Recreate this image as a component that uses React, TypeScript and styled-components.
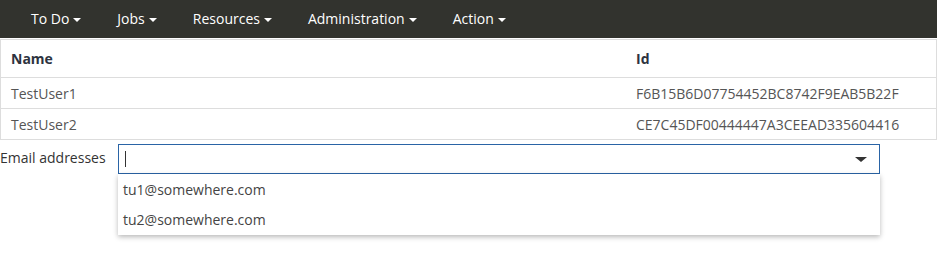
import styled, { createGlobalStyle } from "styled-components";

const GlobalStyle = createGlobalStyle`
  body {
    margin: 0;
    font-family: "Open Sans", "Liberation Sans", sans-serif;
    font-size: 14px;
    color: #333;
    background: #fff;
  }
`;

const NavBar = styled.nav`
  display: flex;
  align-items: center;
  height: 38px;
  padding-left: 16px;
  background-color: #32332e;
`;

const NavItem = styled.div`
  display: flex;
  align-items: center;
  gap: 4px;
  padding: 0 15px;
  margin-right: 6px;
  color: #fff;
  font-size: 14px;
  line-height: 38px;
`;

const Caret = styled.span`
  display: inline-block;
  width: 0;
  height: 0;
  border-top: 4px solid currentColor;
  border-left: 4px solid transparent;
  border-right: 4px solid transparent;
  margin-top: 1px;
`;

const Table = styled.table`
  width: 100%;
  margin-top: 1px;
  border-collapse: collapse;
  border: 1px solid #ddd;
`;

const HeadCell = styled.th<{ $width?: number }>`
  text-align: left;
  font-weight: 700;
  color: #2d3340;
  height: 37px;
  padding: 0 10px;
  border-bottom: 1px solid #ddd;
  width: ${({ $width }) => ($width ? `${$width}px` : "auto")};
`;

const Cell = styled.td`
  height: 30px;
  padding: 0 10px;
  color: #555;
  border-top: 1px solid #ddd;
`;

const FieldRow = styled.div`
  display: flex;
  align-items: flex-start;
  margin-top: 4px;
  padding-bottom: 12px;
`;

const Label = styled.label`
  width: 118px;
  line-height: 28px;
  color: #333;
`;

const Combo = styled.div`
  display: flex;
  flex-direction: column;
  width: 762px;
`;

const Input = styled.div`
  display: flex;
  align-items: center;
  justify-content: space-between;
  height: 28px;
  padding: 0 12px 0 6px;
  border: 1px solid #2a64a6;
  background: #fff;
`;

const Cursor = styled.span`
  width: 1px;
  height: 16px;
  background: #333;
`;

const Arrow = styled.span`
  width: 0;
  height: 0;
  border-top: 5px solid #333;
  border-left: 6px solid transparent;
  border-right: 6px solid transparent;
`;

const EmailList = styled.div`
  display: flex;
  flex-direction: column;
  padding-top: 1px;
  background: #fff;
  box-shadow: 0 2px 5px rgba(0, 0, 0, 0.28);
`;

const EmailItem = styled.div`
  height: 30px;
  line-height: 30px;
  padding: 0 5px;
  color: #444;
`;

const navItems = ["To Do", "Jobs", "Resources", "Administration", "Action"];

const users = [
  { name: "TestUser1", id: "F6B15B6D07754452BC8742F9EAB5B22F" },
  { name: "TestUser2", id: "CE7C45DF00444447A3CEEAD335604416" },
];

const emails = ["tu1@somewhere.com", "tu2@somewhere.com"];

export default function App() {
  return (
    <>
      <GlobalStyle />
      <NavBar>
        {navItems.map((item) => (
          <NavItem key={item}>
            {item}
            <Caret />
          </NavItem>
        ))}
      </NavBar>
      <Table>
        <thead>
          <tr>
            <HeadCell $width={605}>Name</HeadCell>
            <HeadCell>Id</HeadCell>
          </tr>
        </thead>
        <tbody>
          {users.map((u) => (
            <tr key={u.id}>
              <Cell>{u.name}</Cell>
              <Cell>{u.id}</Cell>
            </tr>
          ))}
        </tbody>
      </Table>
      <FieldRow>
        <Label>Email addresses</Label>
        <Combo>
          <Input>
            <Cursor />
            <Arrow />
          </Input>
          <EmailList>
            {emails.map((e) => (
              <EmailItem key={e}>{e}</EmailItem>
            ))}
          </EmailList>
        </Combo>
      </FieldRow>
    </>
  );
}
